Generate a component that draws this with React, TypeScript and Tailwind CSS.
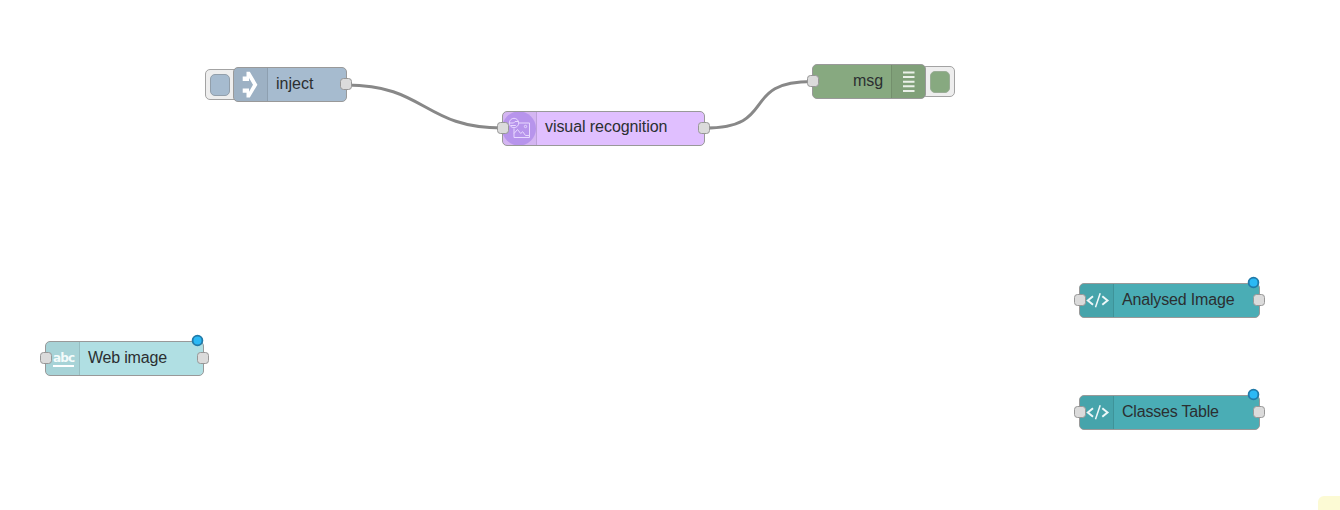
import type { ReactNode } from "react";
import clsx from "clsx";

function Port({ className }: { className: string }) {
  return (
    <span
      className={clsx(
        "absolute top-[11px] size-3 rounded-[3.5px] border border-[#979797] bg-[#dbdbdb]",
        className,
      )}
    />
  );
}

type NodeProps = {
  place: string;
  color: string;
  label: string;
  labelClass: string;
  icon: ReactNode;
  iconRight?: boolean;
  input?: boolean;
  output?: boolean;
  changed?: boolean;
  button?: boolean;
};

function FlowNode({
  place,
  color,
  label,
  labelClass,
  icon,
  iconRight,
  input,
  output,
  changed,
  button,
}: NodeProps) {
  return (
    <div className={clsx("absolute h-[35px]", place)}>
      {button && (
        <span
          className={clsx(
            "absolute top-[2px] flex h-[31px] w-[34px] items-center rounded-[5px] border border-[#a3a3a3] bg-[#eeeeee]",
            iconRight ? "-right-[29px] justify-end pr-[4px]" : "-left-[28px] pl-[4px]",
          )}
        >
          <span
            className={clsx(
              "h-[22px] w-5 rounded-[5px] border",
              color,
              iconRight ? "border-[#9aad96]" : "border-[#929fab]",
            )}
          />
        </span>
      )}
      <div
        className={clsx(
          "relative flex h-full overflow-hidden rounded-[5px] border border-[#999999]",
          iconRight && "flex-row-reverse",
          color,
        )}
      >
        <span
          className={clsx(
            "flex h-full w-[34px] shrink-0 items-center justify-center border-black/10 bg-black/5",
            iconRight ? "border-l" : "border-r",
          )}
        >
          {icon}
        </span>
        <span
          className={clsx(
            "text-[16px] whitespace-nowrap text-[#2b2f31]",
            iconRight ? "pr-[8px]" : "pl-[8px]",
            labelClass,
          )}
        >
          {label}
        </span>
      </div>
      {input && <Port className="-left-[5px]" />}
      {output && <Port className="-right-[5px]" />}
      {changed && (
        <svg className="absolute -top-[7px] right-0 size-[13px]" viewBox="0 0 13 13">
          <circle cx="6.5" cy="6.5" r="4.9" fill="#2bb9f5" stroke="#217aa8" strokeWidth="1.8" />
        </svg>
      )}
    </div>
  );
}

function InjectIcon() {
  return (
    <svg className="h-[33px] w-[33px] shrink-0" viewBox="0 0 33 33" fill="#fff">
      <path
        fillRule="evenodd"
        d="M12.5 3.8h3.3l7.6 12.9-7.6 12.8h-3.3v-4.7H8.700v-4.300h6.300v3.200L19 16.700l-4-6.700v3H8.700V8.500h3.800z"
      />
    </svg>
  );
}

function RecognitionIcon() {
  return (
    <svg
      className="h-[33px] w-[33px] shrink-0"
      viewBox="0 0 33 33"
      fill="none"
      stroke="#e8d8ff"
      strokeWidth="1"
    >
      <circle cx="16" cy="16.5" r="17" fill="#b794ec" stroke="none" />
      <circle cx="11" cy="11" r="4.7" />
      <path d="M6.4 11h4.200l1.400-1.500h3.500M7.800 13.500h5" />
      <path d="M16 11h10.500v14.500h-15.500v-9M11 21.500l3.500-4 3.200 4 2-1.800 2.800 3.800 4 .1" />
      <circle cx="22.5" cy="14.5" r="1.2" />
    </svg>
  );
}

function DebugIcon() {
  return (
    <svg className="h-[33px] w-[33px] shrink-0" viewBox="0 0 33 33" fill="#eaf0e9">
      <path d="M11 6.500h11.500v2H11zM11 11.100h11.500v2H11zM11 15.700h11.500v2H11zM11 20.300h11.500v2H11zM11 24.900h11.500v2H11z" />
    </svg>
  );
}

function TextIcon() {
  return (
    <span className="ml-[2px] block w-[21px] border-b-2 border-white text-center font-['DejaVu_Sans'] text-[12px] leading-[14px] font-bold tracking-[-0.9px] text-[#f3fbfb]">
      abc
    </span>
  );
}

function CodeIcon() {
  return (
    <svg
      className="h-[33px] w-[33px] shrink-0"
      viewBox="0 0 33 33"
      fill="none"
      stroke="#edf7f8"
      strokeWidth="2"
    >
      <path d="M13 12.200L7.800 16.500l5.200 4.300M22.300 12.200l5.200 4.300-5.200 4.300" />
      <path d="M20.200 9.300l-4.700 14" strokeWidth="1.500" />
    </svg>
  );
}

export default function App() {
  return (
    <main className="relative h-[510px] w-[1340px] overflow-hidden bg-white font-['Liberation_Sans',sans-serif]">
      <svg className="absolute inset-0" width="1340" height="510" fill="none" stroke="#888" strokeWidth="3">
        <path d="M346.500 85C426 85 423 128 502.500 128" />
        <path d="M704.500 128C780 128 738 81.500 812.500 81.500" />
      </svg>

      <FlowNode
        place="left-[233px] top-[67px] w-[114px]"
        color="bg-[#a6bbcf]"
        label="inject"
        labelClass="leading-[31px] tracking-normal"
        icon={<InjectIcon />}
        output
        button
      />
      <FlowNode
        place="left-[502px] top-[111px] w-[203px]"
        color="bg-[#e0bfff]"
        label="visual recognition"
        labelClass="leading-[30px] tracking-[-0.07px]"
        icon={<RecognitionIcon />}
        input
        output
      />
      <FlowNode
        place="left-[812px] top-[64px] w-[114px]"
        color="bg-[#87a980]"
        label="msg"
        labelClass="leading-[31px] tracking-[-0.1px]"
        icon={<DebugIcon />}
        iconRight
        input
        button
      />
      <FlowNode
        place="left-[45px] top-[341px] w-[159px]"
        color="bg-[#b0dfe3]"
        label="Web image"
        labelClass="leading-[31px] tracking-[-0.2px]"
        icon={<TextIcon />}
        input
        output
        changed
      />
      <FlowNode
        place="left-[1079px] top-[283px] w-[181px]"
        color="bg-[#4aadb5]"
        label="Analysed Image"
        labelClass="leading-[31px] tracking-[-0.17px]"
        icon={<CodeIcon />}
        input
        output
        changed
      />
      <FlowNode
        place="left-[1079px] top-[395px] w-[181px]"
        color="bg-[#4aadb5]"
        label="Classes Table"
        labelClass="leading-[31px] tracking-[-0.2px]"
        icon={<CodeIcon />}
        input
        output
        changed
      />

      <div className="absolute top-[496px] left-[1318px] h-[24px] w-[30px] rounded-[6px] bg-[#fcfad4]" />
    </main>
  );
}
